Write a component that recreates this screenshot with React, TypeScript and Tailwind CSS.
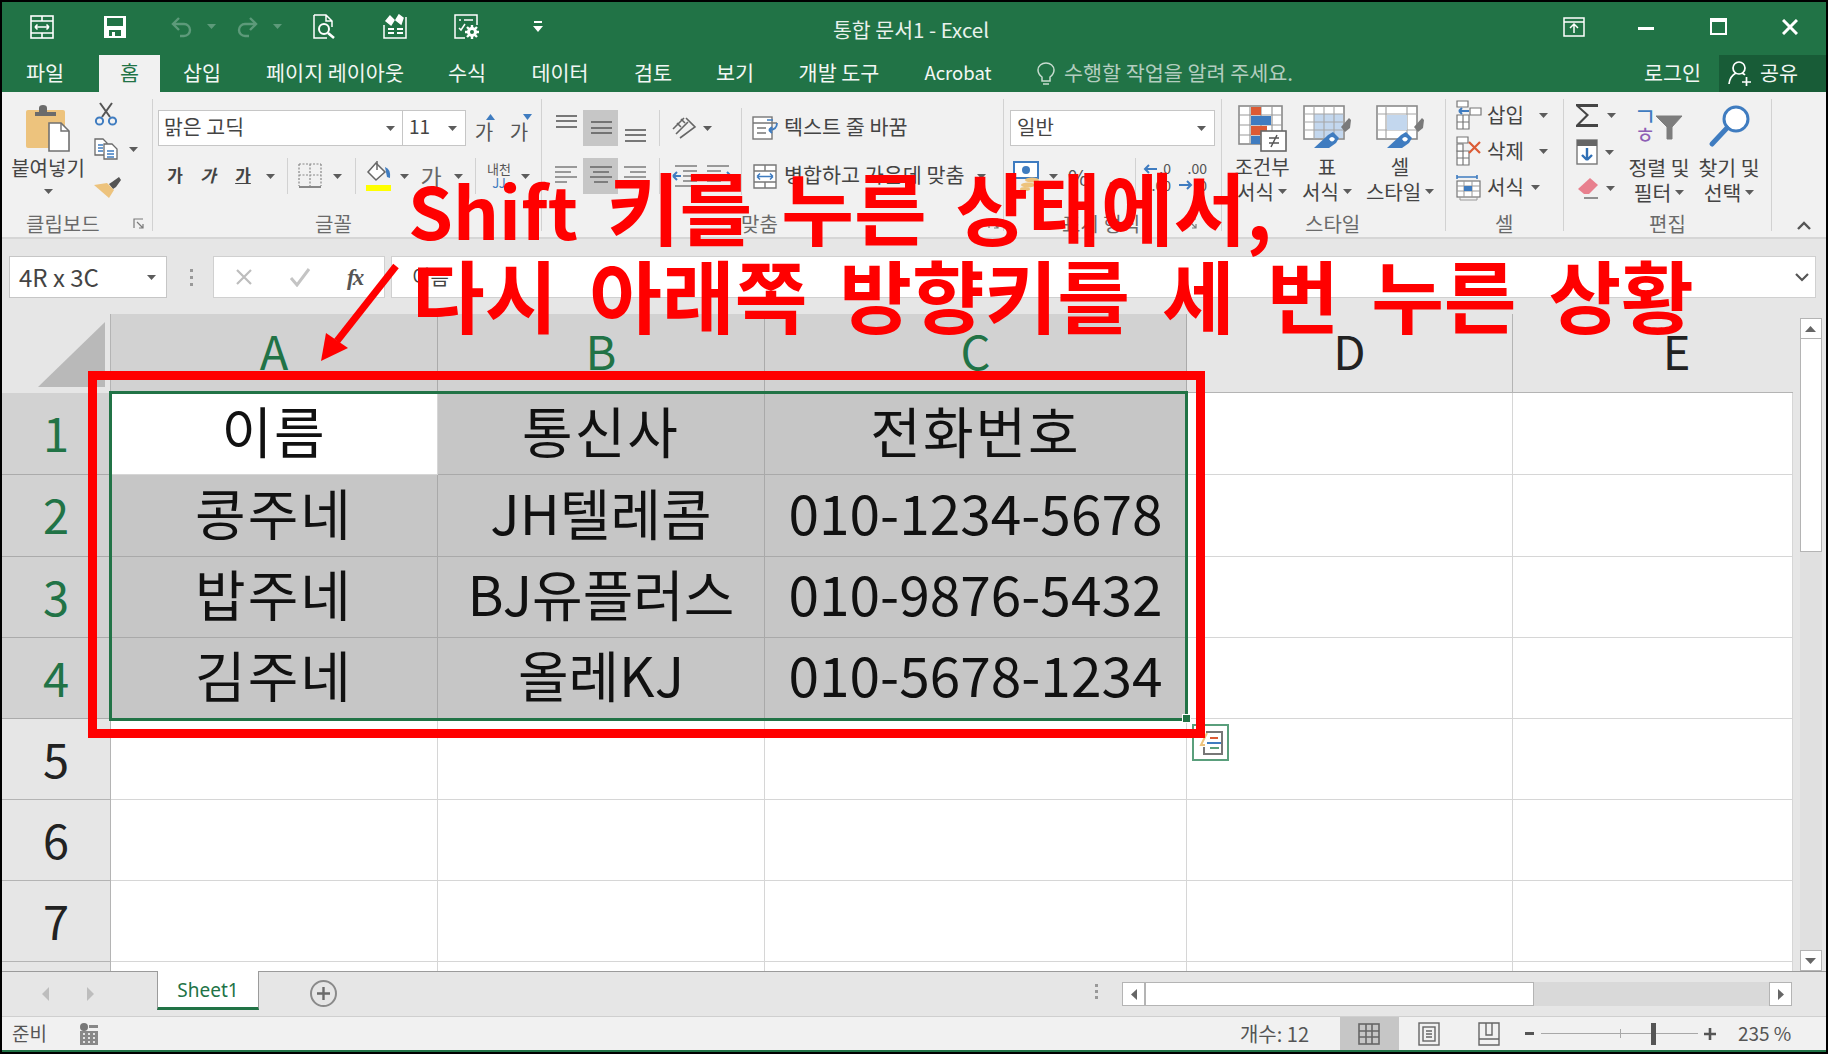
import React from 'react'

// --- small bits ---
const Dd = ({ className = '', color = '#5c5c5c' }: { className?: string; color?: string }) => (
  <svg width="9" height="5" viewBox="0 0 9 5" className={`shrink-0 ${className}`}>
    <path d="M0 0h9L4.5 5z" fill={color} />
  </svg>
)

const Sep = ({ className = '' }: { className?: string }) => <div className={`w-px h-[36px] bg-[#d2d2d2] shrink-0 ${className}`} />

const Label = ({ children, className = '' }: { children: React.ReactNode; className?: string }) => (
  <span className={`text-[20px] leading-none text-[#6a6a6a] whitespace-nowrap ${className}`}>{children}</span>
)

const Launcher = ({ className = '' }: { className?: string }) => (
  <svg width="12" height="12" viewBox="0 0 12 12" className={`shrink-0 ${className}`} fill="none" stroke="#7a7a7a" strokeWidth="1.2">
    <path d="M10 1H1v9" />
    <path d="M4 4l6 6M10 6v4H6" />
  </svg>
)

const Group = ({ width, label, children }: { width: string; label: React.ReactNode; children: React.ReactNode }) => (
  <div className={`${width} h-[132px] mt-[7px] shrink-0 border-r border-[#d2d2d2] flex flex-col`}>
    <div className="h-[108px] shrink-0">{children}</div>
    <div className="h-[32px] shrink-0 flex items-center pt-[2px]">{label}</div>
  </div>
)

// --- title bar icons ---
const I = 'shrink-0'
const QatForm = () => (
  <svg width="24" height="24" viewBox="0 0 24 24" className={I} fill="none" stroke="#fff" strokeWidth="1.6">
    <rect x="1" y="1" width="22" height="22" />
    <path d="M1 6h22M1 18h22M12 1v5M12 18v5M5 12h14M5 12l2.5-2.5M5 12l2.5 2.5M19 12l-2.5-2.5M19 12l-2.5 2.5" />
  </svg>
)
const QatSave = () => (
  <svg width="24" height="24" viewBox="0 0 24 24" className={I}>
    <path fillRule="evenodd" fill="#fff" d="M1 1h22v22H1zM4 3v8h16V3zM6 15v6h12v-6zM9 17h3v4H9z" />
  </svg>
)
const QatUndo = ({ flip = false }: { flip?: boolean }) => (
  <svg width="22" height="22" viewBox="0 0 22 22" className={`${I} ${flip ? '-scale-x-100' : ''}`} fill="none" stroke="#5d9a7a" strokeWidth="2.4">
    <path d="M8 2L2 8l6 6" />
    <path d="M2 8h11a6 6 0 0 1 0 12H9" />
  </svg>
)
const QatPreview = () => (
  <svg width="24" height="26" viewBox="0 0 24 26" className={I} fill="none" stroke="#fff" strokeWidth="1.5">
    <path d="M1 1h12l6 6v6M13 1v6h6M1 1v23h13" />
    <circle cx="11" cy="15" r="5" strokeWidth="2" />
    <path d="M15 19l6 5" strokeWidth="2.6" />
  </svg>
)
const QatPaint = () => (
  <svg width="26" height="25" viewBox="0 0 26 25" className={I} fill="none" stroke="#fff" strokeWidth="1.5">
    <path d="M4 7l4-5 4 4-3 5zM14 6l3-5 4 3-2 6z" fill="#fff" />
    <path d="M2 11v13h22V3" />
    <path d="M6 15h6M15 15h6M6 19h6M15 19h6" strokeWidth="2" />
  </svg>
)
const QatGear = () => (
  <svg width="27" height="26" viewBox="0 0 27 26" className={I} fill="none" stroke="#fff" strokeWidth="1.5">
    <path d="M11 24H1V1h22v10" />
    <path d="M5 6h2M10 6h9M5 14l2 2 4-6" />
    <circle cx="18" cy="18" r="3.5" strokeWidth="3" />
    <path d="M18 11v3M18 22v3M11 18h3M22 18h3M13 13l2 2M21 21l2 2M23 13l-2 2M15 21l-2 2" strokeWidth="2.4" />
  </svg>
)
const QatCustom = () => (
  <svg width="10" height="12" viewBox="0 0 10 12" className={I}>
    <path d="M1 0h8v2H1zM0 5h10L5 11z" fill="#fff" />
  </svg>
)

// --- ribbon icons ---
const PasteIcon = () => (
  <svg width="44" height="47" viewBox="0 0 44 47">
    <rect x="0" y="5" width="39" height="38" rx="2" fill="#edc37d" />
    <path d="M9 11V7h4V3q0-3 4-3t4 3v4h9v4z" fill="#6b6b6b" />
    <path d="M23 18h12l8 8v20H23z" fill="#fff" stroke="#707070" strokeWidth="1.6" />
    <path d="M35 18v8h8" fill="none" stroke="#707070" strokeWidth="1.4" />
  </svg>
)
const CutIcon = () => (
  <svg width="24" height="24" viewBox="0 0 24 24" fill="none">
    <path d="M8 15L18 1M16 15L6 1" stroke="#555" strokeWidth="2" />
    <circle cx="5.5" cy="19" r="3.6" stroke="#3f7cc0" strokeWidth="2" />
    <circle cx="18.5" cy="19" r="3.6" stroke="#3f7cc0" strokeWidth="2" />
  </svg>
)
const CopyIcon = () => (
  <svg width="24" height="22" viewBox="0 0 24 22" fill="#fff" stroke="#6b6b6b" strokeWidth="1.3">
    <path d="M1 1h8l4 4v12H1z" />
    <path d="M10 6h8l5 5v10H10z" />
    <path d="M4 7h5M4 10h5M4 13h5M13 13h7M13 16h7M13 19h7" stroke="#3f7cc0" strokeWidth="1.5" />
  </svg>
)
const BrushIcon = () => (
  <svg width="27" height="23" viewBox="0 0 27 23">
    <path d="M15 8l3-2 7-5 2 3-5 7-3 2z" fill="#555" />
    <path d="M13 7l7 7-5 8L0 9z" fill="#edc37d" />
  </svg>
)
const GrowIcon = ({ up = true }: { up?: boolean }) => (
  <div className="w-[26px] h-[32px] relative flex items-end justify-center pb-[2px]">
    <span className="text-[20px] leading-none text-[#555]">가</span>
    <svg width="9" height="6" viewBox="0 0 9 6" className={up ? 'absolute top-[2px] right-[2px]' : 'absolute top-[2px] right-0 rotate-180'}>
      <path d="M0 6h9L4.5 0z" fill="#3f7cc0" />
    </svg>
  </div>
)
const BorderIcon = () => (
  <svg width="24" height="26" viewBox="0 0 24 26" fill="none" stroke="#888" strokeWidth="1.2" strokeDasharray="2 1.5">
    <path d="M1 1h22M1 1v22M23 1v22M12 1v22M1 12h22" />
    <path d="M1 24h22" strokeDasharray="none" strokeWidth="2" />
  </svg>
)
const FillIcon = () => (
  <svg width="27" height="32" viewBox="0 0 27 32">
    <path d="M10 3l-8 9 8 8 9-8z" fill="#fff" stroke="#666" strokeWidth="1.5" />
    <path d="M11 1v9" stroke="#666" strokeWidth="1.5" />
    <path d="M19 7q6 2 5 11l-3-1z" fill="#3f7cc0" />
    <rect x="0" y="25" width="25" height="6" fill="#ffff00" />
  </svg>
)
const AlignV = ({ y }: { y: number[] }) => (
  <svg width="24" height="36" viewBox="0 0 24 36" stroke="#6a6a6a" strokeWidth="1.8">
    {y.map((v) => <path key={v} d={`M2 ${v}h21`} />)}
  </svg>
)
const AlignH = ({ kind }: { kind: 'l' | 'c' | 'r' }) => (
  <svg width="24" height="36" viewBox="0 0 24 36" stroke={kind === 'c' ? '#666' : '#7c7c7c'} strokeWidth="1.6">
    {kind === 'l' && <path d="M1 9h22M1 14h16M1 19h22M1 24h12" />}
    {kind === 'c' && <path d="M1 9h22M4 14h16M1 19h22M5 24h14" />}
    {kind === 'r' && <path d="M1 9h22M7 14h16M1 19h22M11 24h12" />}
  </svg>
)
const OrientIcon = () => (
  <svg width="26" height="26" viewBox="0 0 26 26" fill="none" stroke="#666" strokeWidth="1.6">
    <path d="M2 14L13 3M5 19L17 7M9 23L24 12L15 3" />
    <path d="M6 8l4 4M10 4l4 4" />
  </svg>
)
const IndentIcon = ({ flip = false }: { flip?: boolean }) => (
  <svg width="26" height="26" viewBox="0 0 26 26" fill="none" className={flip ? '-scale-x-100' : ''}>
    <path d="M3 3h22M11 8h14M11 13h14M11 18h14M3 23h22" stroke="#7c7c7c" strokeWidth="1.6" />
    <path d="M1 13h8M1 13l4-4M1 13l4 4" stroke="#3f7cc0" strokeWidth="2" />
  </svg>
)
const WrapIcon = () => (
  <svg width="26" height="24" viewBox="0 0 26 24" fill="none">
    <rect x="1" y="1" width="19" height="22" fill="#fff" stroke="#777" strokeWidth="1.4" />
    <path d="M1 7h24M5 12h9M5 17h9" stroke="#777" strokeWidth="1.5" />
    <path d="M15 4h6" stroke="#3f7cc0" strokeWidth="1.5" />
    <path d="M25 7q0 7-8 7M17 14l3-3M17 14l3 3" stroke="#3f7cc0" strokeWidth="1.8" />
  </svg>
)
const MergeIcon = () => (
  <svg width="24" height="25" viewBox="0 0 24 25" fill="none">
    <path d="M1 1h22v23H1z" fill="#fff" stroke="#777" strokeWidth="1.4" />
    <path d="M1 7h22M1 18h22M12 1v6M12 18v6" stroke="#777" strokeWidth="1.4" />
    <path d="M4 12.5h16M4 12.5l3-3M4 12.5l3 3M20 12.5l-3-3M20 12.5l-3 3" stroke="#3f7cc0" strokeWidth="1.5" />
  </svg>
)
const AccountIcon = () => (
  <svg width="28" height="30" viewBox="0 0 28 30">
    <path d="M1 1h24v16H1z" fill="#fff" stroke="#3f7cc0" strokeWidth="2" />
    <circle cx="13" cy="9" r="4" fill="#3f7cc0" />
    <ellipse cx="19" cy="19" rx="7" ry="2.6" fill="#edc37d" />
    <ellipse cx="15" cy="24" rx="7" ry="2.6" fill="#edc37d" />
    <ellipse cx="12" cy="28" rx="5" ry="2" fill="#edc37d" />
  </svg>
)
const DecIcon = ({ inc = true }: { inc?: boolean }) => (
  <div className="w-[30px] h-[32px] relative text-[#555] text-[14px] leading-none">
    <span className="absolute top-[1px] right-[2px]">{inc ? '.0' : '.00'}</span>
    <span className="absolute bottom-0 right-[2px]">{inc ? '.00' : '.0'}</span>
    <svg width="14" height="10" viewBox="0 0 14 10" className={inc ? 'absolute left-0 top-[4px] -scale-x-100' : 'absolute left-0 bottom-[2px]'}>
      <path d="M0 5h12M8 1l4 4-4 4" fill="none" stroke="#3f7cc0" strokeWidth="2" />
    </svg>
  </div>
)
const CondIcon = () => (
  <svg width="49" height="47" viewBox="0 0 49 47" fill="none">
    <rect x="1" y="1" width="43" height="38" fill="#fff" stroke="#8a8a8a" strokeWidth="1.6" />
    <path d="M1 10h43M1 20h43M1 30h43M12 1v38M23 1v38M34 1v38" stroke="#9a9a9a" strokeWidth="1.2" />
    <rect x="13" y="2" width="10" height="8" fill="#dc5b35" />
    <rect x="13" y="11" width="20" height="9" fill="#3f7cc0" />
    <rect x="13" y="21" width="16" height="9" fill="#dc5b35" />
    <rect x="13" y="31" width="9" height="8" fill="#3f7cc0" />
    <rect x="23" y="26" width="25" height="20" fill="#fff" stroke="#666" strokeWidth="1.6" />
    <path d="M31 33h10M31 38h10M33 42l6-12" stroke="#555" strokeWidth="1.5" />
  </svg>
)
const BrushOver = () => (
  <>
    <path d="M38 22l8-9 2 2-1 8-5 4z" fill="#7a7a7a" />
    <path d="M25 30l5-3 6 6-3 5-7 5H11z" fill="#3f7cc0" />
    <path d="M26 34q3-4 6 0-3 5-6 0z" fill="#fff" />
  </>
)
const TableStyleIcon = () => (
  <svg width="48" height="45" viewBox="0 0 48 45" fill="none">
    <rect x="1" y="1" width="40" height="33" fill="#fff" stroke="#8a8a8a" strokeWidth="1.6" />
    <rect x="11" y="9" width="29" height="24" fill="#c3d7ee" />
    <path d="M1 9h40M1 17h40M1 25h40M11 1v33M21 1v33M31 1v33" stroke="#a6a6a6" strokeWidth="1.1" />
    <BrushOver />
  </svg>
)
const CellStyleIcon = () => (
  <svg width="48" height="45" viewBox="0 0 48 45" fill="none">
    <rect x="1" y="1" width="40" height="33" fill="#fff" stroke="#8a8a8a" strokeWidth="1.6" />
    <path d="M1 9h40M1 25h40M10 1v33M31 1v33" stroke="#a6a6a6" strokeWidth="1.2" />
    <rect x="11" y="10" width="20" height="15" fill="#c3d7ee" />
    <BrushOver />
  </svg>
)
const CellsBase = () => (
  <path d="M1 1h11v6H1zM1 15h6v7H1zM7 15h6v7H7zM1 22h6v7H1zM7 22h6v7H7z" fill="#fff" stroke="#777" strokeWidth="1.2" />
)
const InsertIcon = () => (
  <svg width="26" height="30" viewBox="0 0 26 30" fill="none">
    <CellsBase />
    <path d="M14 8h11v7H14z" fill="#fff" stroke="#777" strokeWidth="1.2" />
    <path d="M3 11h10M3 11l3-3M3 11l3 3" stroke="#3f7cc0" strokeWidth="2" />
  </svg>
)
const DeleteIcon = () => (
  <svg width="26" height="30" viewBox="0 0 26 30" fill="none">
    <CellsBase />
    <path d="M1 8h6v7H1z" fill="#fff" stroke="#777" strokeWidth="1.2" />
    <path d="M13 6l11 11M24 6L13 17" stroke="#dc5b35" strokeWidth="2.2" />
  </svg>
)
const FormatIcon = () => (
  <svg width="26" height="28" viewBox="0 0 26 28" fill="none">
    <path d="M1 2v4M1 4h20M21 2v4" stroke="#3f7cc0" strokeWidth="1.6" />
    <rect x="1" y="8" width="23" height="16" fill="#fff" stroke="#777" strokeWidth="1.2" />
    <path d="M1 13h23M1 18h23M8 8v16M16 8v16M4 24v3h17v-3" stroke="#999" strokeWidth="1" />
    <rect x="8" y="13" width="8" height="5" fill="#3f7cc0" />
  </svg>
)
const SumIcon = () => (
  <svg width="24" height="25" viewBox="0 0 24 25">
    <path d="M1 1h22v3H5l9 8-9 9h18v3H1v-2l10-10L1 3z" fill="#454545" />
  </svg>
)
const FillDownIcon = () => (
  <svg width="22" height="26" viewBox="0 0 22 26" fill="none">
    <rect x="1" y="1" width="20" height="24" fill="#fff" stroke="#777" strokeWidth="1.4" />
    <rect x="1" y="1" width="20" height="6" fill="#666" />
    <path d="M11 9v12M11 21l-5-5M11 21l5-5" stroke="#2f6fb5" strokeWidth="2.4" />
  </svg>
)
const EraserIcon = () => (
  <svg width="22" height="22" viewBox="0 0 22 22">
    <path d="M13 1l8 7-9 9H7l-6-5z" fill="#e8808e" />
    <path d="M7 21h14" stroke="#666" strokeWidth="1.4" />
  </svg>
)
const SortIcon = () => (
  <div className="flex items-end w-[48px] h-[34px]">
    <div className="flex flex-col items-center w-[20px] leading-none">
      <span className="text-[25px] leading-[18px] text-[#3f7cc0]">ㄱ</span>
      <span className="text-[23px] leading-[18px] text-[#8e5fb5]">ㅎ</span>
    </div>
    <svg width="28" height="25" viewBox="0 0 28 25" className="mb-[2px]">
      <path d="M1 1h26L17 12v12h-5V12z" fill="#7d7d7d" stroke="#7d7d7d" />
    </svg>
  </div>
)
const FindIcon = () => (
  <svg width="42" height="43" viewBox="0 0 42 43" fill="none">
    <circle cx="28" cy="14" r="12" fill="#fff" stroke="#3f7cc0" strokeWidth="3" />
    <path d="M19 23L4 39" stroke="#3f7cc0" strokeWidth="5" strokeLinecap="round" />
  </svg>
)

// --- sheet data ---
const rows = [
  ['이름', '통신사', '전화번호'],
  ['콩주네', 'JH텔레콤', '010-1234-5678'],
  ['밥주네', 'BJ유플러스', '010-9876-5432'],
  ['김주네', '올레KJ', '010-5678-1234'],
]

const colHeads = ['A', 'B', 'C', 'D', 'E']

const tab = 'text-center pb-[2px]'
const cellBase = 'border-r border-b flex items-center justify-center text-[55px] leading-none text-[#111] whitespace-nowrap pb-[9px]'

const Ribbon = () => (
  <div className="h-[147px] bg-[#f1f1f1] border-b-2 border-[#d6d6d6] flex shrink-0">
    {/* clipboard */}
    <Group
      width="w-[151px]"
      label={<><Label className="ml-[24px]">클립보드</Label><Launcher className="ml-[33px]" /></>}
    >
      <div className="flex h-full">
        <div className="w-[92px] flex flex-col items-center">
          <div className="mt-[6px]"><PasteIcon /></div>
          <span className="mt-[3px] text-[20px] leading-[25px] text-[#444]">붙여넣기</span>
          <Dd className="mt-[9px]" />
        </div>
        <div className="flex flex-col">
          <div className="ml-[0px] mt-[3px] h-[24px]"><CutIcon /></div>
          <div className="mt-[12px] h-[22px] flex items-center"><CopyIcon /><Dd className="ml-[11px]" /></div>
          <div className="mt-[16px]"><BrushIcon /></div>
        </div>
      </div>
    </Group>
    {/* font */}
    <Group width="w-[389px]" label={<Label className="ml-[162px]">글꼴</Label>}>
      <div className="pt-[11px]">
        <div className="flex h-[36px] items-center">
          <div className="ml-[5px] w-[308px] h-[36px] flex bg-white border border-[#c6c6c6]">
            <div className="w-[244px] border-r border-[#c6c6c6] flex items-center pl-[5px] pr-[7px] pb-[3px] text-[20.5px] text-[#444] justify-between">
              <span>맑은 고딕</span><Dd className="mt-[3px]" />
            </div>
            <div className="flex-1 flex items-center pl-[6px] pr-[8px] pb-[3px] justify-between text-[19px] text-[#444]">
              <span>11</span><Dd className="mt-[3px]" />
            </div>
          </div>
          <div className="ml-[5px]"><GrowIcon /></div>
          <div className="ml-[9px]"><GrowIcon up={false} /></div>
        </div>
        <div className="flex h-[36px] mt-[12px] items-center text-[#444] text-[17px] font-bold">
          <span className="ml-[10px] w-[24px] text-center pb-[2px]">가</span>
          <span className="ml-[9px] w-[24px] text-center italic pb-[2px]">가</span>
          <span className="ml-[11px] w-[24px] text-center underline pb-[2px]">가</span>
          <Dd className="ml-[11px]" />
          <Sep className="ml-[12px]" />
          <div className="ml-[10px]"><BorderIcon /></div>
          <Dd className="ml-[11px]" />
          <Sep className="ml-[13px]" />
          <div className="ml-[10px]"><FillIcon /></div>
          <Dd className="ml-[7px]" />
          <span className="ml-[10px] w-[24px] text-center text-[23px] font-normal text-[#666]">가</span>
          <Dd className="ml-[11px]" />
          <Sep className="ml-[12px]" />
          <div className="ml-[9px] w-[28px] flex flex-col items-center font-normal text-[13px] leading-[14px]">
            <span className="text-[#555]">내천</span>
            <span className="text-[#3f7cc0]">JJ</span>
          </div>
          <Dd className="ml-[8px]" />
        </div>
      </div>
    </Group>
    {/* alignment */}
    <Group
      width="w-[462px]"
      label={<><Label className="ml-[199px]">맞춤</Label><Launcher className="ml-[210px]" /></>}
    >
      <div className="flex">
        <div className="w-[200px] mt-[9px] h-[87px] border-r border-[#d2d2d2] pt-[2px] shrink-0">
          <div className="flex h-[36px] items-center">
            <div className="ml-[12px]"><AlignV y={[6, 11, 17]} /></div>
            <div className="ml-[5px] w-[35px] h-[36px] bg-[#c6c6c6] flex justify-center"><AlignV y={[12, 18, 23]} /></div>
            <div className="ml-[5px]"><AlignV y={[20, 25, 31]} /></div>
            <Sep className="ml-[12px]" />
            <div className="ml-[11px]"><OrientIcon /></div>
            <Dd className="ml-[6px]" />
          </div>
          <div className="flex h-[36px] mt-[12px] items-center">
            <div className="ml-[12px]"><AlignH kind="l" /></div>
            <div className="ml-[5px] w-[35px] h-[36px] bg-[#c6c6c6] flex justify-center"><AlignH kind="c" /></div>
            <div className="ml-[5px]"><AlignH kind="r" /></div>
            <Sep className="ml-[12px]" />
            <div className="ml-[12px]"><IndentIcon /></div>
            <div className="ml-[8px]"><IndentIcon flip /></div>
          </div>
        </div>
        <div className="pt-[11px] text-[20.7px] text-[#444]">
          <div className="flex h-[36px] items-center">
            <div className="ml-[10px]"><WrapIcon /></div>
            <span className="ml-[6px] pb-[3px]">텍스트 줄 바꿈</span>
          </div>
          <div className="flex h-[36px] mt-[12px] items-center">
            <div className="ml-[11px]"><MergeIcon /></div>
            <span className="ml-[7px] pb-[3px]">병합하고 가운데 맞춤</span>
            <Dd className="ml-[12px]" />
          </div>
        </div>
      </div>
    </Group>
    {/* number */}
    <Group
      width="w-[218px]"
      label={<><Label className="ml-[58px]">표시 형식</Label><Launcher className="ml-[46px]" /></>}
    >
      <div className="pt-[11px]">
        <div className="ml-[6px] w-[205px] h-[36px] bg-white border border-[#c6c6c6] flex items-center justify-between pl-[6px] pr-[8px] pb-[3px] text-[20px] text-[#444]">
          <span>일반</span><Dd className="mt-[3px]" />
        </div>
        <div className="flex h-[36px] mt-[12px] items-center text-[#555] text-[22px]">
          <div className="ml-[9px]"><AccountIcon /></div>
          <Dd className="ml-[8px]" />
          <span className="ml-[10px] w-[20px] text-center leading-none">%</span>
          <span className="ml-[20px] w-[10px] font-bold leading-none">,</span>
          <Sep className="ml-[17px]" />
          <div className="ml-[7px]"><DecIcon /></div>
          <div className="ml-[6px]"><DecIcon inc={false} /></div>
        </div>
      </div>
    </Group>
    {/* styles */}
    <Group width="w-[224px]" label={<Label className="ml-[83px]">스타일</Label>}>
      <div className="flex text-[20px] leading-[25px] text-[#444] text-center">
        <div className="ml-[4px] w-[72px] flex flex-col items-center pt-[6px]">
          <div className="h-[47px]"><CondIcon /></div>
          <span className="mt-[2px]">조건부</span>
          <div className="flex items-center"><span>서식</span><Dd className="ml-[4px]" /></div>
        </div>
        <div className="w-[58px] flex flex-col items-center pt-[6px]">
          <div className="h-[47px]"><TableStyleIcon /></div>
          <span className="mt-[2px]">표</span>
          <div className="flex items-center"><span>서식</span><Dd className="ml-[4px]" /></div>
        </div>
        <div className="w-[88px] flex flex-col items-center pt-[6px]">
          <div className="h-[47px]"><CellStyleIcon /></div>
          <span className="mt-[2px]">셀</span>
          <div className="flex items-center"><span>스타일</span><Dd className="ml-[4px]" /></div>
        </div>
      </div>
    </Group>
    {/* cells */}
    <Group width="w-[118px]" label={<Label className="ml-[49px]">셀</Label>}>
      <div className="-mt-[2px] text-[20px] text-[#444]">
        <div className="flex items-center h-[36px]">
          <div className="ml-[10px] w-[26px]"><InsertIcon /></div>
          <span className="ml-[5px]">삽입</span>
          <Dd className="ml-[15px]" />
        </div>
        <div className="flex items-center h-[36px]">
          <div className="ml-[10px] w-[26px]"><DeleteIcon /></div>
          <span className="ml-[5px]">삭제</span>
          <Dd className="ml-[15px]" />
        </div>
        <div className="flex items-center h-[36px]">
          <div className="ml-[10px] w-[26px]"><FormatIcon /></div>
          <span className="ml-[5px]">서식</span>
          <Dd className="ml-[7px]" />
        </div>
      </div>
    </Group>
    {/* editing */}
    <Group width="w-[208px]" label={<Label className="ml-[85px]">편집</Label>}>
      <div className="flex">
        <div className="w-[60px] flex flex-col -mt-[2px]">
          <div className="flex items-center h-[36px]"><div className="ml-[11px]"><SumIcon /></div><Dd className="ml-[8px]" /></div>
          <div className="flex items-center h-[38px]"><div className="ml-[12px]"><FillDownIcon /></div><Dd className="ml-[7px]" /></div>
          <div className="flex items-center h-[34px]"><div className="ml-[13px]"><EraserIcon /></div><Dd className="ml-[7px]" /></div>
        </div>
        <div className="text-[20.5px] leading-[25px] text-[#444] flex">
          <div className="w-[70px] flex flex-col items-center pt-[9px]">
            <div className="h-[47px]"><SortIcon /></div>
            <span className="whitespace-nowrap">정렬 및</span>
            <div className="flex items-center"><span>필터</span><Dd className="ml-[4px]" /></div>
          </div>
          <div className="w-[70px] flex flex-col items-center pt-[6px]">
            <div className="h-[50px]"><FindIcon /></div>
            <span className="whitespace-nowrap">찾기 및</span>
            <div className="flex items-center"><span>선택</span><Dd className="ml-[4px]" /></div>
          </div>
        </div>
      </div>
    </Group>
    <div className="flex-1 flex justify-end items-end pb-[7px] pr-[15px]">
      <svg width="14" height="9" viewBox="0 0 14 9" fill="none" stroke="#555" strokeWidth="2.4"><path d="M1 8l6-6 6 6" /></svg>
    </div>
  </div>
)

export default function App() {
  return (
    <div className="relative w-[1828px] h-[1054px] bg-black pt-[2px] px-[2px] pb-[2px] overflow-hidden font-['Noto_Sans_CJK_KR','Noto_Sans',sans-serif]">
      <div className="h-[1050px] flex flex-col bg-[#e6e6e6]">
        {/* title bar */}
        <div className="h-[53px] bg-[#217346] flex items-center shrink-0 pb-[4px]">
          <div className="ml-[28px]"><QatForm /></div>
          <div className="ml-[49px]"><QatSave /></div>
          <div className="ml-[44px]"><QatUndo /></div>
          <Dd className="ml-[14px]" color="#5d9a7a" />
          <div className="ml-[20px]"><QatUndo flip /></div>
          <Dd className="ml-[15px]" color="#5d9a7a" />
          <div className="ml-[31px]"><QatPreview /></div>
          <div className="ml-[45px]"><QatPaint /></div>
          <div className="ml-[46px]"><QatGear /></div>
          <div className="ml-[52px]"><QatCustom /></div>
          <span className="ml-[290px] mt-[5px] text-[20.5px] text-[#e9f1ec] whitespace-nowrap">통합 문서1 - Excel</span>
          <div className="flex-1" />
          <div className="w-[72px] flex justify-center">
            <svg width="22" height="20" viewBox="0 0 22 20" fill="none" stroke="#fff" strokeWidth="1.5">
              <rect x="1" y="1" width="20" height="18" />
              <path d="M1 5h20M11 16V8M7 11l4-4 4 4" />
            </svg>
          </div>
          <div className="w-[72px] flex justify-center pt-[4px]"><div className="w-[16px] h-[3px] bg-white" /></div>
          <div className="w-[72px] flex justify-center"><div className="w-[17px] h-[17px] border-2 border-t-4 border-white" /></div>
          <div className="w-[72px] flex justify-center">
            <svg width="16" height="16" viewBox="0 0 16 16" stroke="#fff" strokeWidth="3"><path d="M1 1l14 14M15 1L1 15" /></svg>
          </div>
        </div>
        {/* tabs */}
        <div className="h-[37px] bg-[#217346] flex items-center shrink-0 text-[20.7px] text-[#f2f7f4] whitespace-nowrap">
          <div className={`w-[86px] ${tab}`}>파일</div>
          <div className="ml-[11px] w-[61px] h-full bg-[#f1f1f1] text-[#217346] flex items-center justify-center pb-[2px]">홈</div>
          <div className={`w-[84px] ${tab}`}>삽입</div>
          <div className={`w-[182px] ${tab}`}>페이지 레이아웃</div>
          <div className={`w-[82px] ${tab}`}>수식</div>
          <div className={`w-[104px] ${tab}`}>데이터</div>
          <div className={`w-[82px] ${tab}`}>검토</div>
          <div className={`w-[82px] ${tab}`}>보기</div>
          <div className={`w-[126px] ${tab}`}>개발 도구</div>
          <div className={`w-[112px] text-[18.5px] ${tab}`}>Acrobat</div>
          <svg width="18" height="24" viewBox="0 0 18 24" fill="none" stroke="#c8dcd0" strokeWidth="1.5" className="ml-[23px]">
            <path d="M5 15q-4-3-4-7a8 7 0 0 1 16 0q0 4-4 7v4H5zM6 22h6" />
          </svg>
          <span className="ml-[9px] text-[#b3cdbf] pb-[2px]">수행할 작업을 알려 주세요.</span>
          <div className="flex-1" />
          <span className="pb-[2px]">로그인</span>
          <div className="ml-[18px] w-[107px] h-full bg-[#185c37] flex items-center pb-[2px]">
            <svg width="24" height="26" viewBox="0 0 24 26" fill="none" stroke="#fff" strokeWidth="1.7" className="ml-[9px]">
              <circle cx="11" cy="8" r="6" />
              <path d="M1 24q1-8 7-11M14 13q2 1 3 2M14 22h9M18.500 17v9" />
            </svg>
            <span className="ml-[8px]">공유</span>
          </div>
        </div>
        <Ribbon />
        {/* formula bar */}
        <div className="h-[75px] flex items-start pt-[17px] shrink-0 bg-[#e6e6e6]">
          <div className="ml-[7px] w-[158px] h-[42px] bg-white border border-[#c6c6c6] flex items-center justify-between pl-[9px] pr-[10px] text-[24px] text-[#444]">
            <span>4R x 3C</span><Dd />
          </div>
          <div className="ml-[23px] h-[42px] flex flex-col justify-center gap-[4px]">
            <div className="w-[3px] h-[3px] bg-[#999]" /><div className="w-[3px] h-[3px] bg-[#999]" /><div className="w-[3px] h-[3px] bg-[#999]" />
          </div>
          <div className="ml-[20px] w-[172px] h-[42px] bg-white border border-[#d0d0d0] flex items-center">
            <svg width="18" height="18" viewBox="0 0 18 18" stroke="#bdbdbd" strokeWidth="2.2" className="ml-[21px]"><path d="M2 2l14 14M16 2L2 16" /></svg>
            <svg width="22" height="20" viewBox="0 0 22 20" fill="none" stroke="#c4c4c4" strokeWidth="3" className="ml-[36px]"><path d="M2 11l6 7L20 2" /></svg>
            <span className="ml-[36px] italic font-bold font-['Liberation_Serif',serif] text-[23px] text-[#555] leading-none tracking-[-2px]">fx</span>
          </div>
          <div className="ml-[6px] w-[1425px] h-[42px] bg-white border border-[#d0d0d0] flex items-center justify-between pl-[20px] pr-[6px] text-[20px] text-[#444]">
            <span>이름</span>
            <svg width="14" height="9" viewBox="0 0 14 9" fill="none" stroke="#555" strokeWidth="2.2"><path d="M1 1l6 6 6-6" /></svg>
          </div>
          <div className="flex-1" />
        </div>
        {/* grid + vertical scrollbar */}
        <div className="h-[658px] flex shrink-0 overflow-hidden border-b border-[#9b9b9b]">
          <div className="w-[1791px] grid grid-cols-[109px_327px_327px_422px_326px_280px] grid-rows-[79px_82px_82px_81px_81px_81px_81px_81px_10px] border-r border-[#9b9b9b]">
            <div className="bg-[#e6e6e6] border-r border-[#b4b4b4]">
              <svg width="108" height="78" viewBox="0 0 108 78"><path d="M103 8v65H36z" fill="#b9b9b9" /></svg>
            </div>
            {colHeads.map((c, i) => (
              <div
                key={c}
                className={i < 3
                  ? 'bg-[#d2d2d2] border-r border-[#ababab] flex items-center justify-center text-[47px] leading-none text-[#217346] pb-[8px]'
                  : i === 3
                    ? 'bg-[#e6e6e6] border-r border-b border-[#b4b4b4] flex items-center justify-center text-[47px] leading-none text-[#222] pb-[8px]'
                    : 'bg-[#e6e6e6] border-b border-[#b4b4b4] flex items-center justify-center text-[47px] leading-none text-[#222] pb-[8px] pl-[47px]'}
              >
                {c}
              </div>
            ))}
            {[1, 2, 3, 4, 5, 6, 7, 8].map((n) => (
              <React.Fragment key={n}>
                <div
                  className={n <= 4
                    ? 'bg-[#d2d2d2] border-r border-b border-[#ababab] flex items-center justify-center text-[47px] leading-none text-[#217346] pb-[4px]'
                    : 'bg-[#e6e6e6] border-r border-b border-[#b4b4b4] flex items-center justify-center text-[47px] leading-none text-[#222] pb-[4px]'}
                >
                  {n < 8 ? n : ''}
                </div>
                {[0, 1, 2, 3, 4].map((c) => {
                  const val = n <= 4 && c < 3 ? rows[n - 1][c] : ''
                  const sel = n <= 4 && c < 3 && !(n === 1 && c === 0)
                  const wide = n === 1 || c === 0
                  return (
                    <div
                      key={c}
                      className={`${cellBase} ${sel ? 'bg-[#c6c6c6] border-[#a9a9a9]' : 'bg-white border-[#d6d6d6]'} ${wide ? 'tracking-[2px]' : ''}`}
                    >
                      {val}
                    </div>
                  )
                })}
              </React.Fragment>
            ))}
          </div>
          <div className="flex-1 flex flex-col items-center pt-[4px] pl-[2px]">
            <div className="w-[22px] h-[21px] bg-white border border-[#b4b4b4] flex items-center justify-center">
              <svg width="11" height="6" viewBox="0 0 11 6"><path d="M0 6h11L5.500 0z" fill="#666" /></svg>
            </div>
            <div className="w-[22px] h-[213px] bg-white border border-[#b4b4b4] border-t-0" />
            <div className="w-[22px] flex-1 bg-[#e0e0e0]" />
            <div className="w-[22px] h-[21px] bg-white border border-[#b4b4b4] flex items-center justify-center">
              <svg width="11" height="6" viewBox="0 0 11 6"><path d="M0 0h11L5.500 6z" fill="#666" /></svg>
            </div>
          </div>
        </div>
        {/* sheet tabs */}
        <div className="h-[45px] flex items-start shrink-0 border-b border-[#cfcfcf] bg-[#e6e6e6]">
          <svg width="7" height="14" viewBox="0 0 7 14" className="ml-[40px] mt-[15px]"><path d="M7 0v14L0 7z" fill="#bdbdbd" /></svg>
          <svg width="7" height="14" viewBox="0 0 7 14" className="ml-[38px] mt-[15px]"><path d="M0 0v14l7-7z" fill="#bdbdbd" /></svg>
          <div className="ml-[63px] w-[102px] h-[39px] bg-white border-x border-[#9b9b9b] border-b-[3px] border-b-[#217346] -mt-px pt-[2px] flex items-center justify-center text-[19px] text-[#217346] font-['Noto_Sans',sans-serif]">
            Sheet1
          </div>
          <div className="ml-[51px] mt-[8px] w-[27px] h-[27px] rounded-full border-2 border-[#8a8a8a] flex items-center justify-center">
            <svg width="13" height="13" viewBox="0 0 13 13" stroke="#6a6a6a" strokeWidth="2.4"><path d="M6.500 0v13M0 6.500h13" /></svg>
          </div>
          <div className="ml-[758px] mt-[12px] flex flex-col gap-[3px]">
            <div className="w-[3px] h-[3px] bg-[#999]" /><div className="w-[3px] h-[3px] bg-[#999]" /><div className="w-[3px] h-[3px] bg-[#999]" />
          </div>
          <div className="ml-[24px] mt-[10px] w-[670px] h-[24px] flex bg-[#d9d9d9]">
            <div className="w-[23px] h-full bg-white border border-[#b4b4b4] flex items-center justify-center">
              <svg width="6" height="11" viewBox="0 0 6 11"><path d="M6 0v11L0 5.500z" fill="#666" /></svg>
            </div>
            <div className="w-[389px] h-full bg-white border border-[#b4b4b4]" />
            <div className="flex-1" />
            <div className="w-[23px] h-full bg-white border border-[#b4b4b4] flex items-center justify-center">
              <svg width="6" height="11" viewBox="0 0 6 11"><path d="M0 0v11l6-5.500z" fill="#666" /></svg>
            </div>
          </div>
        </div>
        {/* status bar */}
        <div className="h-[33px] flex items-center shrink-0 bg-[#f1f1f1] text-[19px] text-[#555] border-b-2 border-[#217346] box-content">
          <span className="ml-[10px]">준비</span>
          <svg width="20" height="24" viewBox="0 0 20 24" className="ml-[32px]">
            <circle cx="5" cy="5" r="4" fill="#777" />
            <rect x="1" y="9" width="18" height="14" fill="#888" />
            <rect x="10" y="3" width="9" height="3" fill="#888" />
            <path d="M4 12h2M9 12h2M14 12h2M4 16h2M9 16h2M14 16h2M4 20h2M9 20h2M14 20h2" stroke="#fff" strokeWidth="1.6" />
          </svg>
          <span className="ml-[1141px] w-[70px] whitespace-nowrap text-[20px]">개수: 12</span>
          <div className="ml-[30px] w-[59px] h-full bg-[#c6c6c6] flex items-center justify-center">
            <svg width="22" height="22" viewBox="0 0 22 22" fill="none" stroke="#666" strokeWidth="1.6"><rect x="1" y="1" width="20" height="20" /><path d="M1 8h20M1 14h20M8 1v20M14 1v20" /></svg>
          </div>
          <svg width="22" height="24" viewBox="0 0 22 24" fill="none" stroke="#666" strokeWidth="1.4" className="ml-[19px]"><rect x="1" y="1" width="20" height="22" /><rect x="5" y="5" width="12" height="14" /><path d="M8 9h6M8 12h6M8 15h6" /></svg>
          <svg width="22" height="24" viewBox="0 0 22 24" fill="none" stroke="#666" strokeWidth="1.4" className="ml-[38px]"><path d="M1 1h20v22H1zM1 17h20M8 1v12h6V1" /></svg>
          <div className="ml-[25px] w-[9px] h-[3px] bg-[#555]" />
          <div className="ml-[7px] w-[157px] h-px bg-[#a8a8a8] flex items-center relative">
            <div className="absolute left-[79px] w-px h-[9px] bg-[#a8a8a8]" />
            <div className="absolute left-[110px] w-[5px] h-[22px] bg-[#555]" />
          </div>
          <svg width="12" height="12" viewBox="0 0 12 12" stroke="#555" strokeWidth="2.6" className="ml-[6px]"><path d="M6 0v12M0 6h12" /></svg>
          <span className="ml-[22px] whitespace-nowrap">235 %</span>
        </div>
      </div>

      {/* selection overlay */}
      <div className="absolute left-[109px] top-[391px] w-[1079px] h-[330px] border-[3px] border-[#217346]" />
      <div className="absolute left-[1182px] top-[714px] w-[9px] h-[9px] bg-[#217346] border border-white" />
      <div className="absolute left-[1192px] top-[724px] w-[37px] h-[37px] bg-white border-2 border-[#5a9f7c] flex items-center justify-center">
        <svg width="24" height="24" viewBox="0 0 24 24">
          <path d="M8 2l-6 12h4" fill="none" stroke="#edc37d" strokeWidth="2" />
          <path d="M7 1h16v22H5V16" fill="none" stroke="#777" strokeWidth="2" />
          <path d="M11 7h8" stroke="#dc5b35" strokeWidth="2" />
          <path d="M8 12h14" stroke="#3f7cc0" strokeWidth="2" />
          <path d="M11 17h9" stroke="#5a9f7c" strokeWidth="2" />
        </svg>
      </div>

      {/* annotation */}
      <div className="absolute left-[88px] top-[371px] w-[1117px] h-[367px] border-[9px] border-[#ff0000]" />
      <svg width="90" height="110" viewBox="310 260 90 110" className="absolute left-[310px] top-[260px]">
        <path d="M396 266L337 341" stroke="#ff0000" strokeWidth="7" />
        <path d="M321 361l5-28 22 15z" fill="#ff0000" />
      </svg>
      <div className="absolute left-[408px] top-[161px] text-[79px] leading-[90px] font-bold text-[#ff0000] whitespace-nowrap [word-spacing:11px]">
        <span className="text-[72px]">Shift</span> 키를 누른 상태에서,
      </div>
      <div className="absolute left-[412px] top-[249px] text-[79px] leading-[90px] font-bold text-[#ff0000] whitespace-nowrap [word-spacing:14px]">
        다시 아래쪽 방향키를 세 번 누른 상황
      </div>
    </div>
  )
}
